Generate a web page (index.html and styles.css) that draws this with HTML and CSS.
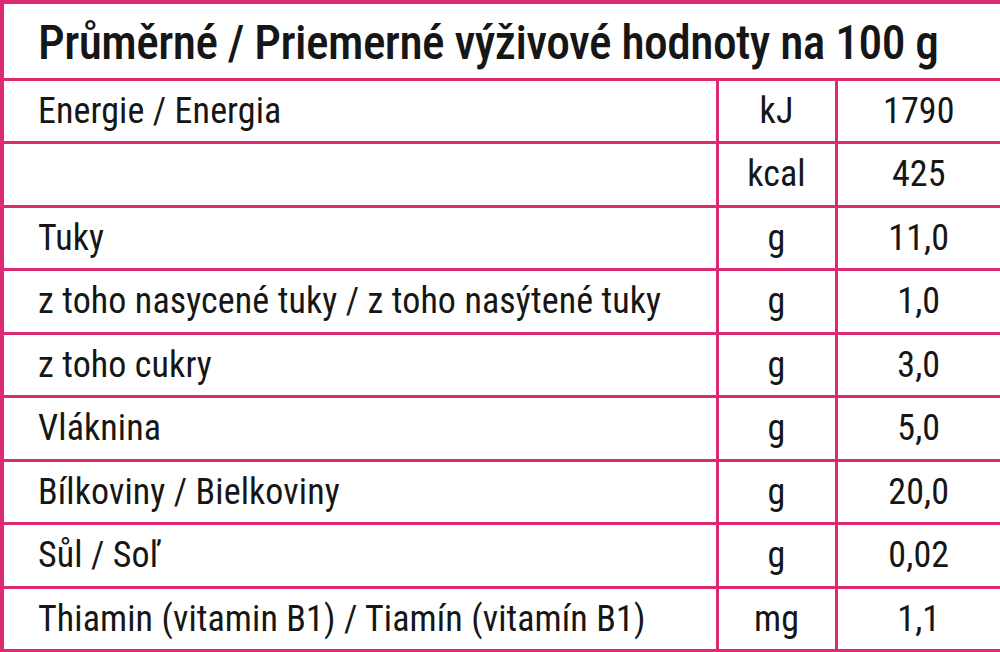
FILE: index.html
```html
<!DOCTYPE html>
<html lang="cs">
<head>
<meta charset="utf-8">
<link rel="stylesheet" href="styles.css">
</head>
<body>
<table class="nutri">
  <colgroup>
    <col class="c-name"><col class="c-unit"><col class="c-val">
  </colgroup>
  <thead>
    <tr class="head-row"><th colspan="3" class="title">Průměrné / Priemerné výživové hodnoty na 100 g</th></tr>
  </thead>
  <tbody>
    <tr><td class="name">Energie / Energia</td><td class="unit">kJ</td><td class="val">1790</td></tr>
    <tr><td class="name"></td><td class="unit">kcal</td><td class="val">425</td></tr>
    <tr><td class="name">Tuky</td><td class="unit">g</td><td class="val">11,0</td></tr>
    <tr><td class="name">z toho nasycené tuky / z toho nasýtené tuky</td><td class="unit">g</td><td class="val">1,0</td></tr>
    <tr><td class="name">z toho cukry</td><td class="unit">g</td><td class="val">3,0</td></tr>
    <tr><td class="name">Vláknina</td><td class="unit">g</td><td class="val">5,0</td></tr>
    <tr><td class="name">Bílkoviny / Bielkoviny</td><td class="unit">g</td><td class="val">20,0</td></tr>
    <tr><td class="name">Sůl / Soľ</td><td class="unit">g</td><td class="val">0,02</td></tr>
    <tr><td class="name">Thiamin (vitamin B1) / Tiamín (vitamín B1)</td><td class="unit">mg</td><td class="val">1,1</td></tr>
  </tbody>
</table>
</body>
</html>
```
FILE: styles.css
```css
html, body {
  margin: 0;
  padding: 0;
  background: #ffffff;
}
.nutri {
  width: 1000px;
  height: 652px;
  border-collapse: collapse;
  table-layout: fixed;
  border: 4px solid #dd2a70;
  font-family: "Roboto", "Liberation Sans", sans-serif;
  font-stretch: 86%;
  color: #161616;
  white-space: nowrap;
}
.c-name { width: 715px; }
.c-unit { width: 119px; }
.c-val { width: 166px; }
.nutri th, .nutri td {
  border: 3px solid #dd2a70;
  padding: 0;
  vertical-align: middle;
  line-height: 1;
}
.head-row {
  height: 77px;
}
.title {
  text-align: left;
  padding: 6px 0 0 34px !important;
  font-size: 47.5px;
  font-weight: 500;
  letter-spacing: -0.55px;
}
.nutri tbody tr {
  height: 63.5px;
}
.nutri tbody td {
  font-size: 36px;
  letter-spacing: 0.1px;
}
.name {
  padding-left: 34px !important;
  text-align: left;
}
.unit, .val {
  text-align: center;
}
```
